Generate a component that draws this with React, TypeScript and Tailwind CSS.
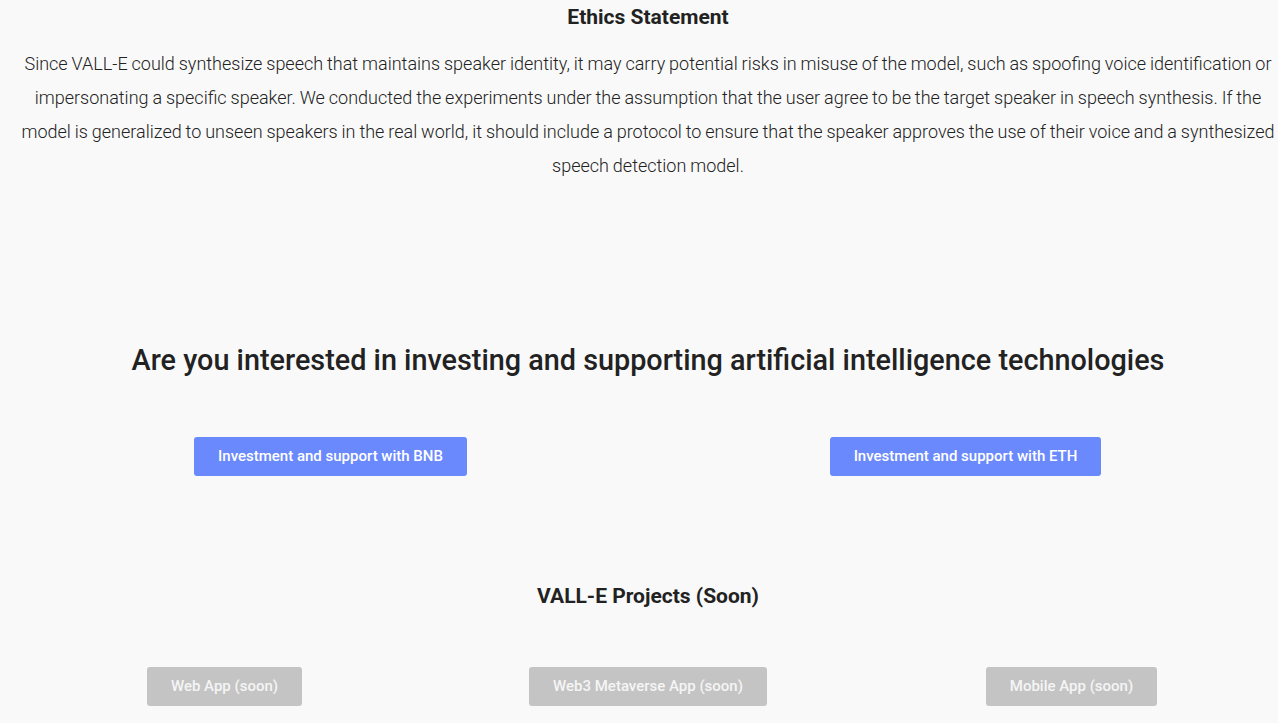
import React from "react";

const INVEST = ["Investment and support with BNB", "Investment and support with ETH"];
const PROJECTS = ["Web App (soon)", "Web3 Metaverse App (soon)", "Mobile App (soon)"];

export default function App() {
  return (
    <div
      className="min-h-[723px] bg-[#f9f9f9] text-[#222] pl-[18px]"
      style={{ fontFamily: "Roboto, 'Liberation Sans', sans-serif" }}
    >
      {/* Ethics */}
      <section className="pt-[3px] text-center">
        <h2 className="text-[21px] leading-[28px] font-bold">Ethics Statement</h2>
        <p className="mt-[16px] text-[18px] leading-[34px] font-light text-[#222] [word-spacing:-0.5px]">
          Since VALL-E could synthesize speech that maintains speaker identity, it may carry potential risks in
          misuse of the model, such as spoofing voice identification or impersonating a specific speaker. We
          conducted the experiments under the assumption that the user agree to be the target speaker in speech
          synthesis. If the model is generalized to unseen speakers in the real world, it should include a
          protocol to ensure that the speaker approves the use of their voice and a synthesized speech detection
          model.
        </p>
      </section>

      {/* Invest */}
      <section className="mt-[159px] text-center">
        <h1 className="text-[28.8px] leading-[36px] font-medium">
          Are you interested in investing and supporting artificial intelligence technologies
        </h1>
        <div className="mt-[59px] grid grid-cols-[625px_625px] gap-[10px]">
          {INVEST.map((t) => (
            <div key={t} className="flex justify-center">
              <button className="h-[39px] px-[24px] rounded-[3px] bg-[#6a89fd] text-white text-[15px] font-medium">
                {t}
              </button>
            </div>
          ))}
        </div>
      </section>

      {/* Projects */}
      <section className="mt-[106px] text-center">
        <h2 className="text-[21px] leading-[28px] font-bold">VALL-E Projects (Soon)</h2>
        <div className="mt-[57px] grid grid-cols-3 gap-[10.5px]">
          {PROJECTS.map((t) => (
            <div key={t} className="flex justify-center">
              <button className="h-[39px] px-[24px] rounded-[3px] bg-[#c4c4c4] text-[#f5f5f5] text-[15px] font-medium">
                {t}
              </button>
            </div>
          ))}
        </div>
      </section>
    </div>
  );
}
